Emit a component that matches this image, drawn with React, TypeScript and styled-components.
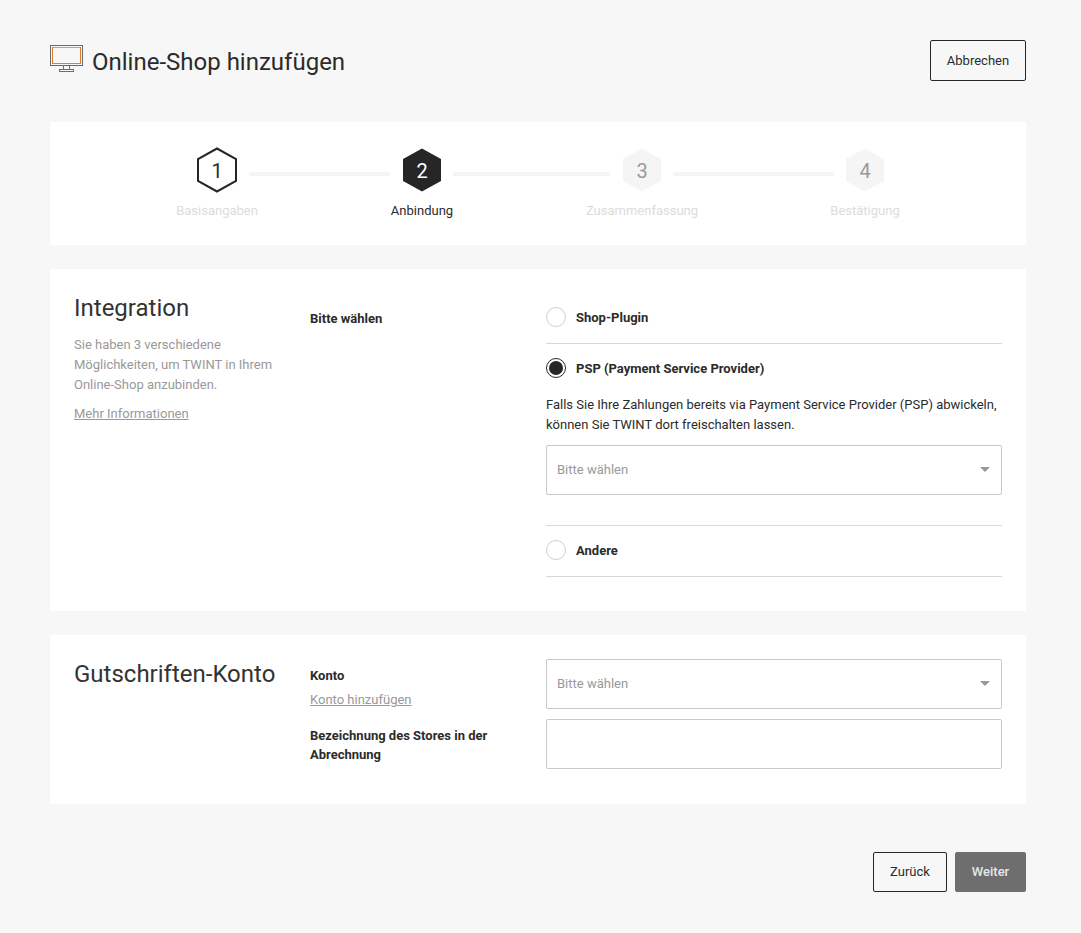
import React from "react";
import styled, { createGlobalStyle } from "styled-components";

const GlobalStyle = createGlobalStyle`
  html, body {
    margin: 0;
    padding: 0;
    background: #f7f7f7;
    color: #2b2b2b;
    font-family: Roboto, "Liberation Sans", sans-serif;
    font-size: 13px;
  }
`;

const Page = styled.div`
  width: 976px;
  height: 933px;
  box-sizing: border-box;
  margin-left: 50px;
  padding-top: 40px;
`;

const Header = styled.header`
  display: flex;
  justify-content: space-between;
  align-items: flex-start;
  margin-bottom: 39px;
`;

const TitleRow = styled.div`
  display: flex;
  align-items: flex-start;
  gap: 9px;
`;

const IconWrap = styled.div`
  margin-top: 5px;
  width: 33px;
  height: 27px;
`;

const Title = styled.h1`
  margin: 1px 0 0;
  font-size: 24px;
  font-weight: 400;
  line-height: 42px;
`;

const Button = styled.button<{ $primary?: boolean; $width: number }>`
  width: ${(p) => p.$width}px;
  height: 40px;
  box-sizing: border-box;
  border: 1px solid ${(p) => (p.$primary ? "#6e6e6e" : "#262626")};
  border-radius: 2px;
  background: ${(p) => (p.$primary ? "#6e6e6e" : "transparent")};
  color: ${(p) => (p.$primary ? "#e6e6e6" : "#2b2b2b")};
  font-family: inherit;
  font-size: 13px;
  font-weight: ${(p) => (p.$primary ? 500 : 400)};
  padding: 0 0 2px;
`;

const CancelButton = styled(Button)`
  height: 41px;
  padding: 0;
`;

const Panel = styled.section`
  background: #fff;
  margin-bottom: 24px;
`;

const Stepper = styled(Panel)`
  display: flex;
  height: 123px;
  box-sizing: border-box;
  padding: 24px 0 0 135px;
`;

const Step = styled.div`
  width: 64px;
  display: flex;
  flex-direction: column;
  align-items: center;
  flex: none;
`;

const StepLabel = styled.span<{ $active?: boolean }>`
  margin-top: 8px;
  line-height: 18px;
  white-space: nowrap;
  color: ${(p) => (p.$active ? "#2b2b2b" : "#dcdcdc")};
`;

const Connector = styled.div<{ $width: number; $left?: number; $right?: number }>`
  flex: none;
  width: ${(p) => p.$width}px;
  height: 4px;
  margin: 26px ${(p) => p.$right ?? 0}px 0 ${(p) => p.$left ?? 0}px;
  background: #f5f5f5;
`;

const Hex = styled.svg`
  display: block;
`;

const HexNumber = styled.text`
  font-family: Roboto, "Liberation Sans", sans-serif;
  font-size: 20px;
  text-anchor: middle;
`;

const Section = styled(Panel)<{ $height: number }>`
  display: grid;
  grid-template-columns: 236px 236px 456px;
  height: ${(p) => p.$height}px;
  box-sizing: border-box;
  padding: 24px 24px 0;
`;

const SectionTitle = styled.h2`
  margin: 0;
  font-size: 24px;
  font-weight: 400;
  line-height: 30px;
  white-space: nowrap;
  color: #333;
`;

const Intro = styled.p`
  margin: 12px 0 0;
  width: 205px;
  color: #999;
  line-height: 20px;
`;

const TextLink = styled.a`
  display: block;
  color: #999;
  text-decoration: underline;
  line-height: 20px;
`;

const IntroLink = styled(TextLink)`
  margin-top: 9px;
`;

const AccountLink = styled(TextLink)`
  margin-top: 4px;
`;

const FieldLabel = styled.div<{ $top?: number }>`
  font-weight: 700;
  line-height: 20px;
  margin-top: ${(p) => p.$top ?? 0}px;
  width: 190px;
`;

const StoreLabel = styled(FieldLabel)`
  line-height: 19px;
`;

const Options = styled.div`
  display: flex;
  flex-direction: column;
`;

const Option = styled.div<{ $pad?: number }>`
  border-bottom: 1px solid #d8d8d8;
  padding-bottom: ${(p) => p.$pad ?? 0}px;
`;

const OptionHead = styled.label`
  display: flex;
  align-items: center;
  gap: 10px;
  height: 48px;
  font-weight: 700;
`;

const Radio = styled.span<{ $checked?: boolean }>`
  width: 20px;
  height: 20px;
  box-sizing: border-box;
  border-radius: 50%;
  border: 1px solid ${(p) => (p.$checked ? "#262626" : "#cfcfcf")};
  display: flex;
  align-items: center;
  justify-content: center;
  &::after {
    content: "";
    display: ${(p) => (p.$checked ? "block" : "none")};
    width: 14px;
    height: 14px;
    border-radius: 50%;
    background: #262626;
  }
`;

const OptionBody = styled.div`
  padding: 3px 0 30px;
`;

const OptionText = styled.p`
  margin: 0 0 10px;
  line-height: 20px;
`;

const Select = styled.div`
  display: flex;
  justify-content: space-between;
  align-items: center;
  height: 50px;
  box-sizing: border-box;
  padding: 0 11px 2px 10px;
  border: 1px solid #c8c8c8;
  border-radius: 2px;
  color: #999;
`;

const Caret = styled.span`
  width: 0;
  height: 0;
  border-left: 5px solid transparent;
  border-right: 5px solid transparent;
  border-top: 5px solid #999;
`;

const Input = styled.input`
  display: block;
  width: 100%;
  height: 50px;
  box-sizing: border-box;
  margin-top: 10px;
  border: 1px solid #c8c8c8;
  border-radius: 2px;
  background: #fff;
`;

const Footer = styled.footer`
  display: flex;
  justify-content: flex-end;
  gap: 8px;
  margin-top: 48px;
`;

const MonitorIcon = () => (
  <svg width="33" height="27" viewBox="0 0 33 27" fill="none" shapeRendering="crispEdges">
    <rect x="0.5" y="0.5" width="32" height="20" rx="1" stroke="#6a6a6a" />
    <path d="M3 2.5h27" stroke="#a8a8a8" />
    <path d="M3 18.5h27" stroke="#b08a72" />
    <path d="M2.5 2v17M30.5 2v17" stroke="#e07b30" />
    <path d="M13.5 21v3M19.5 21v3" stroke="#6e6e6e" />
    <rect x="9.5" y="24.5" width="14" height="2" stroke="#6e6e6e" />
  </svg>
);

const steps = [
  { n: 1, label: "Basisangaben", state: "done" },
  { n: 2, label: "Anbindung", state: "active" },
  { n: 3, label: "Zusammenfassung", state: "todo" },
  { n: 4, label: "Bestätigung", state: "todo" },
];
const connectors = [
  { width: 141 },
  { width: 157, left: -1 },
  { width: 161, left: -1, right: -1 },
];

const HexBadge = ({ n, state }: { n: number; state: string }) => {
  const fill = state === "active" ? "#262626" : state === "todo" ? "#f5f5f5" : "#fff";
  const color = state === "active" ? "#fff" : state === "todo" ? "#999" : "#2b2b2b";
  return (
    <Hex width="44" height="48" viewBox="0 0 44 48">
      <polygon
        points="22,2.5 41,13 41,35 22,45.5 3,35 3,13"
        fill={fill}
        stroke={state === "done" ? "#262626" : "none"}
        strokeWidth="2"
      />
      <HexNumber x="22" y="32" fill={color}>
        {n}
      </HexNumber>
    </Hex>
  );
};

export default function App() {
  return (
    <>
      <GlobalStyle />
      <Page>
        <Header>
          <TitleRow>
            <IconWrap>
              <MonitorIcon />
            </IconWrap>
            <Title>Online-Shop hinzufügen</Title>
          </TitleRow>
          <CancelButton $width={96}>Abbrechen</CancelButton>
        </Header>

        <Stepper>
          {steps.map((s, i) => (
            <React.Fragment key={s.n}>
              <Step>
                <HexBadge n={s.n} state={s.state} />
                <StepLabel $active={s.state === "active"}>{s.label}</StepLabel>
              </Step>
              {i < 3 && (
                <Connector
                  $width={connectors[i].width}
                  $left={connectors[i].left}
                  $right={connectors[i].right}
                />
              )}
            </React.Fragment>
          ))}
        </Stepper>

        <Section $height={342}>
          <div>
            <SectionTitle>Integration</SectionTitle>
            <Intro>Sie haben 3 verschiedene Möglichkeiten, um TWINT in Ihrem Online-Shop anzubinden.</Intro>
            <IntroLink>Mehr Informationen</IntroLink>
          </div>
          <FieldLabel $top={16}>Bitte wählen</FieldLabel>
          <Options>
            <Option $pad={2}>
              <OptionHead>
                <Radio />
                Shop-Plugin
              </OptionHead>
            </Option>
            <Option>
              <OptionHead>
                <Radio $checked />
                PSP (Payment Service Provider)
              </OptionHead>
              <OptionBody>
                <OptionText>
                  Falls Sie Ihre Zahlungen bereits via Payment Service Provider (PSP) abwickeln, können Sie TWINT dort freischalten lassen.
                </OptionText>
                <Select>
                  Bitte wählen
                  <Caret />
                </Select>
              </OptionBody>
            </Option>
            <Option $pad={2}>
              <OptionHead>
                <Radio />
                Andere
              </OptionHead>
            </Option>
          </Options>
        </Section>

        <Section $height={169}>
          <SectionTitle>Gutschriften-Konto</SectionTitle>
          <div>
            <FieldLabel $top={7}>Konto</FieldLabel>
            <AccountLink>Konto hinzufügen</AccountLink>
            <StoreLabel $top={16}>Bezeichnung des Stores in der Abrechnung</StoreLabel>
          </div>
          <div>
            <Select>
              Bitte wählen
              <Caret />
            </Select>
            <Input />
          </div>
        </Section>

        <Footer>
          <Button $width={74}>Zurück</Button>
          <Button $primary $width={71}>Weiter</Button>
        </Footer>
      </Page>
    </>
  );
}
